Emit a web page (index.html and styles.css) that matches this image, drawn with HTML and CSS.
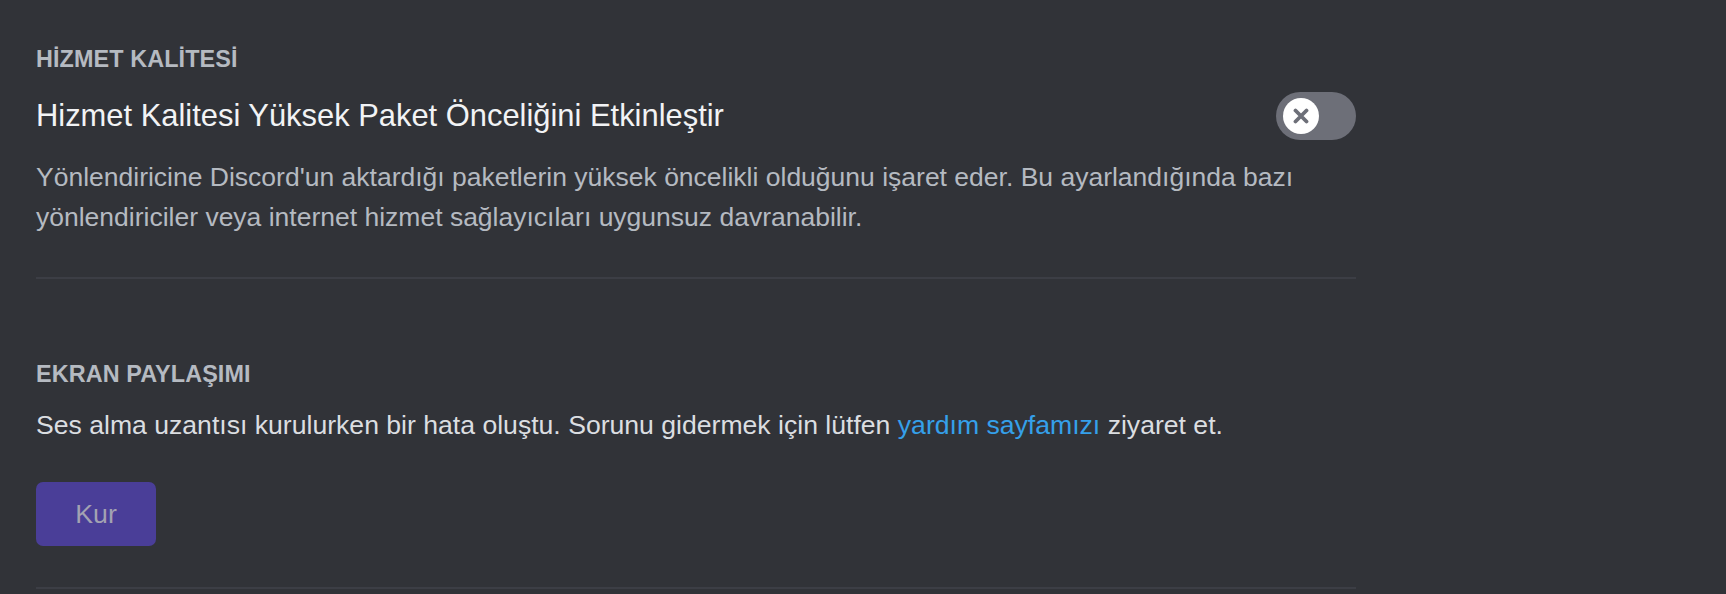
FILE: index.html
```html
<!DOCTYPE html>
<html lang="tr">
<head>
<meta charset="utf-8">
<title>Ses ve Görüntü</title>
<link rel="stylesheet" href="styles.css">
</head>
<body>
<main class="settings">
  <section class="section section-qos">
    <h2 class="section-title">HİZMET KALİTESİ</h2>
    <div class="setting-row">
      <label class="setting-label" for="qos">Hizmet Kalitesi Yüksek Paket Önceliğini Etkinleştir</label>
      <div class="toggle" id="qos" role="switch" aria-checked="false">
        <span class="toggle-knob">
          <svg class="toggle-icon" viewBox="0 0 16 16" width="16" height="16" aria-hidden="true">
            <path d="M2.5 2.5 L13.5 13.5 M13.5 2.5 L2.5 13.5" stroke="currentColor" stroke-width="3.8" stroke-linecap="round" fill="none"/>
          </svg>
        </span>
      </div>
    </div>
    <p class="setting-desc">Yönlendiricine Discord'un aktardığı paketlerin yüksek öncelikli olduğunu işaret eder. Bu ayarlandığında bazı yönlendiriciler veya internet hizmet sağlayıcıları uygunsuz davranabilir.</p>
  </section>

  <section class="section section-screen">
    <h2 class="section-title">EKRAN PAYLAŞIMI</h2>
    <p class="setting-text">Ses alma uzantısı kurulurken bir hata oluştu. Sorunu gidermek için lütfen <a class="link" href="#">yardım sayfamızı</a> ziyaret et.</p>
    <button class="btn-install" type="button" disabled>Kur</button>
  </section>
</main>
</body>
</html>
```

FILE: styles.css
```css
html, body {
  margin: 0;
  padding: 0;
}

body {
  background: #313338;
  font-family: "Liberation Sans", Arial, sans-serif;
  color: #dbdee1;
  height: 594px;
  overflow: hidden;
}

.settings {
  width: 1320px;
  padding: 43px 0 0 36px;
}

.section {
  padding-bottom: 40px;
  border-bottom: 2px solid #3c3e45;
}

.section-screen {
  margin-top: 79px;
  padding-bottom: 41px;
}

.section-title {
  margin: 0;
  font-size: 23.4px;
  line-height: 32px;
  font-weight: 700;
  letter-spacing: 0.1px;
  color: #b5bac1;
}

.setting-row {
  margin-top: 17px;
  display: flex;
  align-items: center;
  justify-content: space-between;
  height: 48px;
}

.setting-label {
  font-size: 30.9px;
  line-height: 40px;
  color: #f2f3f5;
}

.toggle {
  width: 80px;
  height: 48px;
  border-radius: 24px;
  background: #6d6f78;
  display: flex;
  align-items: center;
  padding-left: 7px;
  box-sizing: border-box;
}

.toggle-knob {
  width: 36px;
  height: 36px;
  border-radius: 50%;
  background: #ffffff;
  display: flex;
  align-items: center;
  justify-content: center;
  color: #6d6f78;
}

.toggle-icon {
  display: block;
}

.setting-desc {
  margin: 17px 0 0;
  font-size: 26.5px;
  line-height: 40px;
  color: #b5bac1;
}

.setting-text {
  margin: 15px 0 0;
  font-size: 26.6px;
  line-height: 40px;
  color: #dbdee1;
}

.link {
  color: #35a0ea;
  text-decoration: none;
}

.btn-install {
  display: block;
  margin-top: 37px;
  width: 120px;
  height: 64px;
  border: none;
  border-radius: 7px;
  background: #4a3e98;
  color: #a3a2b2;
  font-family: "Liberation Sans", Arial, sans-serif;
  font-size: 26.7px;
  font-weight: 400;
  padding: 0;
}
```
